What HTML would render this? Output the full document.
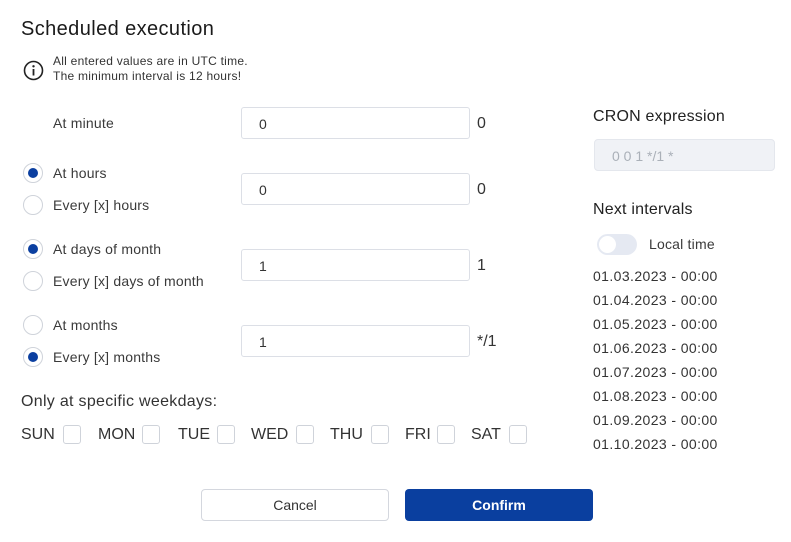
<!DOCTYPE html>
<html><head><style>
*{box-sizing:border-box;margin:0;padding:0}
body{width:791px;height:542px;background:#fff;font-family:"Liberation Sans",sans-serif;color:#333;position:relative;overflow:hidden}
.a{position:absolute;white-space:nowrap}
.lbl{font-size:14px;color:#3a3a3a;letter-spacing:0.2px}
.inp{position:absolute;left:241px;width:229px;height:32px;border:1px solid #dcdfe6;border-radius:3px;font-size:14px;padding:8px 0 0 17px;color:#333}
.val{position:absolute;left:477px;font-size:16px;color:#333}
.r{position:absolute;left:23px;width:20px;height:20px;border:1px solid #cfd3da;border-radius:50%}
.r.on::after{content:"";position:absolute;left:4px;top:4px;width:10px;height:10px;border-radius:50%;background:#0b3fa0}
.cb{position:absolute;top:425px;width:18px;height:19px;border:1px solid #cfd3da;border-radius:3px}
.d{font-size:16px;top:426px}
.dt{position:absolute;left:593px;font-size:14px;color:#333;letter-spacing:0.4px}
</style></head><body>
<div class="a" style="left:21px;top:18px;font-size:20px;color:#1a1a1a;letter-spacing:0.4px">Scheduled execution</div>
<svg class="a" style="left:23px;top:60px" width="21" height="21" viewBox="0 0 21 21"><circle cx="10.5" cy="10.5" r="9" fill="none" stroke="#222" stroke-width="1.6"/><circle cx="10.5" cy="6.3" r="1.2" fill="#222"/><path d="M10.5 9v6.5" stroke="#222" stroke-width="1.8"/></svg>
<div class="a" style="left:53px;top:54px;font-size:12px;line-height:15px;color:#333;letter-spacing:0.25px">All entered values are in UTC time.<br>The minimum interval is 12 hours!</div>

<div class="a lbl" style="left:53px;top:115px">At minute</div>
<div class="inp" style="top:107px">0</div><div class="val" style="top:115px">0</div>

<div class="r on" style="top:163px"></div><div class="a lbl" style="left:53px;top:165px">At hours</div>
<div class="r" style="top:195px"></div><div class="a lbl" style="left:53px;top:197px">Every [x] hours</div>
<div class="inp" style="top:173px">0</div><div class="val" style="top:181px">0</div>

<div class="r on" style="top:239px"></div><div class="a lbl" style="left:53px;top:241px">At days of month</div>
<div class="r" style="top:271px"></div><div class="a lbl" style="left:53px;top:273px">Every [x] days of month</div>
<div class="inp" style="top:249px">1</div><div class="val" style="top:257px">1</div>

<div class="r" style="top:315px"></div><div class="a lbl" style="left:53px;top:317px">At months</div>
<div class="r on" style="top:347px"></div><div class="a lbl" style="left:53px;top:349px">Every [x] months</div>
<div class="inp" style="top:325px">1</div><div class="val" style="top:333px">*/1</div>

<div class="a" style="left:21px;top:393px;font-size:16px;letter-spacing:0.3px">Only at specific weekdays:</div>
<div class="a d" style="left:21px">SUN</div><div class="cb" style="left:63px"></div>
<div class="a d" style="left:98px">MON</div><div class="cb" style="left:142px"></div>
<div class="a d" style="left:178px">TUE</div><div class="cb" style="left:217px"></div>
<div class="a d" style="left:251px">WED</div><div class="cb" style="left:296px"></div>
<div class="a d" style="left:330px">THU</div><div class="cb" style="left:371px"></div>
<div class="a d" style="left:405px">FRI</div><div class="cb" style="left:437px"></div>
<div class="a d" style="left:471px">SAT</div><div class="cb" style="left:509px"></div>

<div class="a" style="left:593px;top:108px;font-size:16px;color:#222;letter-spacing:0.2px">CRON expression</div>
<div class="a" style="left:594px;top:139px;width:181px;height:32px;background:#f0f2f6;border:1px solid #e4e7ed;border-radius:4px;font-size:14px;color:#aab0b8;padding:8px 0 0 17px">0 0 1 */1 *</div>
<div class="a" style="left:593px;top:201px;font-size:16px;color:#222;letter-spacing:0.2px">Next intervals</div>
<div class="a" style="left:597px;top:234px;width:40px;height:21px;border-radius:11px;background:#e5e9f2"><div style="position:absolute;left:2px;top:2px;width:17px;height:17px;border-radius:50%;background:#fff"></div></div>
<div class="a lbl" style="left:649px;top:236px">Local time</div>
<div class="dt" style="top:268px">01.03.2023 - 00:00</div>
<div class="dt" style="top:292px">01.04.2023 - 00:00</div>
<div class="dt" style="top:316px">01.05.2023 - 00:00</div>
<div class="dt" style="top:340px">01.06.2023 - 00:00</div>
<div class="dt" style="top:364px">01.07.2023 - 00:00</div>
<div class="dt" style="top:388px">01.08.2023 - 00:00</div>
<div class="dt" style="top:412px">01.09.2023 - 00:00</div>
<div class="dt" style="top:436px">01.10.2023 - 00:00</div>

<div class="a" style="left:201px;top:489px;width:188px;height:32px;border:1px solid #d4d7de;border-radius:4px;text-align:center;font-size:14px;line-height:30px;color:#333">Cancel</div>
<div class="a" style="left:405px;top:489px;width:188px;height:32px;background:#0a3f9f;border-radius:4px;text-align:center;font-size:14px;line-height:32px;color:#fff;font-weight:bold">Confirm</div>
</body></html>
